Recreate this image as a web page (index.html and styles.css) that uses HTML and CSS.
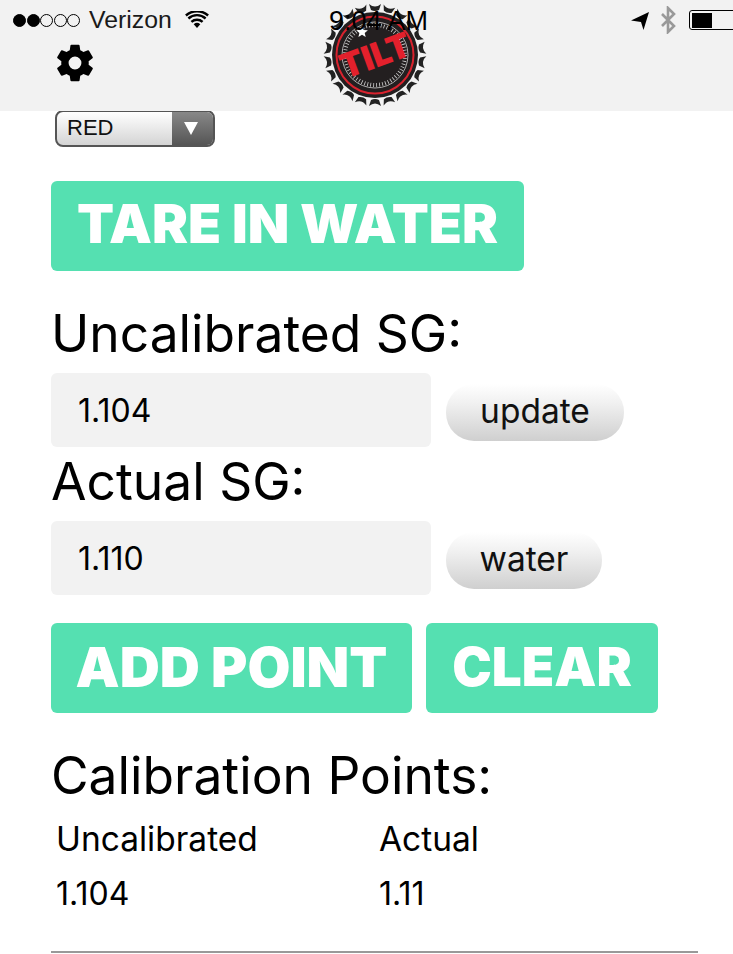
FILE: index.html
```html
<!DOCTYPE html>
<html lang="en">
<head>
<meta charset="utf-8">
<title>Tilt Calibration</title>
<link rel="stylesheet" href="styles.css">
</head>
<body>
<header class="topbar">
  <div class="status">
    <div class="status-left">
      <span class="signal"><i class="dot on"></i><i class="dot on"></i><i class="dot"></i><i class="dot"></i><i class="dot"></i></span>
      <span class="carrier">Verizon</span>
      <svg class="wifi" width="24" height="18" viewBox="0 0 24 18"><path d="M12 17 8.700 13.300a5 5 0 0 1 6.600 0Z" fill="#000"/><path d="M6.400 10.900a8.300 8.300 0 0 1 11.200 0" fill="none" stroke="#000" stroke-width="2.400"/><path d="M3.400 7.500a12.700 12.700 0 0 1 17.200 0" fill="none" stroke="#000" stroke-width="2.400"/><path d="M.9 4.500a16.500 16.500 0 0 1 22.200 0" fill="none" stroke="#000" stroke-width="2.400"/></svg>
    </div>
    <div class="status-right">
      <svg class="arrow" width="19" height="19" viewBox="0 0 19 19"><path d="M0 9.500 18 1 12.500 19 10 11Z" fill="#000"/></svg>
      <svg class="bt" width="16" height="28" viewBox="0 0 16 28"><path d="M2 8 14 20 8 26V2l6 6L2 20" fill="none" stroke="#999" stroke-width="2.600"/></svg>
      <span class="battery"><span class="charge"></span></span>
    </div>
  </div>
  <svg class="gear" width="44" height="44" viewBox="0 0 24 24"><path fill="#000" d="M19.430 12.980c.04-.32.07-.64.07-.98s-.03-.66-.07-.98l2.110-1.650a.5.5 0 0 0 .12-.64l-2-3.460a.5.500 0 0 0-.61-.22l-2.490 1a7.300 7.300 0 0 0-1.690-.98l-.38-2.650A.49.490 0 0 0 14 2h-4a.49.490 0 0 0-.49.420l-.38 2.650c-.61.250-1.170.590-1.690.980l-2.490-1a.5.5 0 0 0-.61.220l-2 3.460a.49.490 0 0 0 .12.640l2.110 1.650c-.04.320-.07.650-.07.980s.03.660.07.980l-2.110 1.650a.5.5 0 0 0-.12.640l2 3.460c.12.220.39.300.61.220l2.490-1c.52.400 1.080.730 1.690.980l.38 2.650c.03.240.24.420.49.420h4c.25 0 .46-.18.490-.420l.38-2.650c.61-.250 1.170-.590 1.690-.980l2.490 1c.23.090.49 0 .61-.220l2-3.460a.5.5 0 0 0-.12-.64zM12 15.500a3.500 3.500 0 1 1 0-7 3.500 3.500 0 0 1 0 7z"/></svg>
  <svg class="logo" width="104" height="104" viewBox="-52 -52 104 104">
    <defs><path id="spike" d="M-6 -51 Q0 -46 6 -51 L4 -45 Q0 -43 -4 -45Z" fill="#222"/></defs>
    <g>
      <use href="#spike"/><use href="#spike" transform="rotate(16.400)"/><use href="#spike" transform="rotate(32.700)"/><use href="#spike" transform="rotate(49.100)"/><use href="#spike" transform="rotate(65.500)"/><use href="#spike" transform="rotate(81.800)"/><use href="#spike" transform="rotate(98.200)"/><use href="#spike" transform="rotate(114.500)"/><use href="#spike" transform="rotate(130.900)"/><use href="#spike" transform="rotate(147.300)"/><use href="#spike" transform="rotate(163.600)"/><use href="#spike" transform="rotate(180)"/><use href="#spike" transform="rotate(196.400)"/><use href="#spike" transform="rotate(212.700)"/><use href="#spike" transform="rotate(229.100)"/><use href="#spike" transform="rotate(245.500)"/><use href="#spike" transform="rotate(261.800)"/><use href="#spike" transform="rotate(278.200)"/><use href="#spike" transform="rotate(294.500)"/><use href="#spike" transform="rotate(310.900)"/><use href="#spike" transform="rotate(327.300)"/><use href="#spike" transform="rotate(343.600)"/>
    </g>
    <circle r="43" fill="#231f20"/>
    <circle r="38.500" fill="none" stroke="#d9232e" stroke-width="2"/>
    <circle r="33" fill="none" stroke="#cfcfcf" stroke-width=".8"/>
    <circle r="30" fill="none" stroke="#cfcfcf" stroke-width="4" stroke-dasharray=".8 2.200"/>
    <g transform="rotate(-20)">
      <text class="logo-text" x="0" y="12.500" text-anchor="middle">TILT</text>
    </g>
    <path d="M-13 -29l1.700 3.900 4.200.3-3.200 2.700 1 4.100-3.700-2.200-3.600 2.200 1-4.100-3.200-2.700 4.200-.3Z" fill="#fff"/>
  </svg>
  <span class="clock">9:04 AM</span>
</header>

<main class="content">
  <div class="picker"><span class="picker-label">RED</span><span class="picker-arrow"></span></div>
  <button class="action tare">TARE IN WATER</button>

  <h2 class="label first">Uncalibrated SG:</h2>
  <div class="field-row">
    <div class="field">1.104</div>
    <button class="pill update">update</button>
  </div>

  <h2 class="label">Actual SG:</h2>
  <div class="field-row">
    <div class="field">1.110</div>
    <button class="pill water">water</button>
  </div>

  <div class="actions">
    <button class="action add">ADD POINT</button>
    <button class="action clear">CLEAR</button>
  </div>

  <h2 class="label points">Calibration Points:</h2>
  <table class="points-table">
    <tr><td class="col-a">Uncalibrated</td><td>Actual</td></tr>
    <tr class="values"><td class="col-a">1.104</td><td>1.11</td></tr>
  </table>
  <hr class="rule">
</main>
</body>
</html>
```
FILE: styles.css
```css
* { box-sizing: border-box; }
html, body { margin: 0; padding: 0; height: 954px; overflow: hidden; background: #fff; }
body { font-family: "Inter", "Liberation Sans", sans-serif; color: #000; }

.topbar { position: relative; z-index: 2; height: 111px; background: #f2f2f2; }
.status { display: flex; justify-content: space-between; align-items: center; height: 40px; padding-left: 13px; font-family: "Liberation Sans", sans-serif; }
.status-left, .status-right { display: flex; align-items: center; }
.signal { display: flex; gap: .5px; }
.dot { width: 13px; height: 13px; border-radius: 50%; border: 1px solid #000; }
.dot.on { background: #000; }
.carrier { margin-left: 9px; font-size: 24.800px; color: #1a1a1a; }
.wifi { margin-left: 13px; }
.status-right { margin-right: -4px; }
.bt { margin-left: 10px; }
.battery { margin-left: 13px; width: 48px; height: 20px; border: 1.500px solid #000; border-radius: 3px; padding: 1.500px; }
.charge { display: block; width: 20px; height: 100%; background: #000; }
.gear { position: absolute; left: 53px; top: 41px; }
.logo { position: absolute; left: 323px; top: 3px; }
.logo-text { font-family: "Inter", sans-serif; font-weight: 900; font-size: 34px; fill: #e3202c; }
.clock { position: absolute; left: 329px; top: 8px; font-family: "Liberation Sans", sans-serif; font-size: 27px; line-height: 26px; }

.content { padding-left: 51px; }
.picker { display: flex; width: 160px; height: 37px; margin: -1px 0 0 4px; border: 2px solid #555; border-radius: 8px; overflow: hidden; background: linear-gradient(#fff, #d4d4d4); }
.picker-label { flex: 1; padding-left: 10px; font-family: "Liberation Sans", sans-serif; font-size: 22px; line-height: 32px; color: #111; }
.picker-arrow { position: relative; width: 41px; background: linear-gradient(#888, #555); }
.picker-arrow::after { content: ""; position: absolute; left: 12px; top: 10px; border-left: 7px solid transparent; border-right: 7px solid transparent; border-top: 13px solid #fff; }

.action { display: block; height: 90px; border: 0; border-radius: 6px; padding: 0 0 2px; background: #55e0b1; color: #fff; font-family: "Inter", sans-serif; font-weight: 900; font-size: 54px; line-height: 86px; text-align: center; }
.tare { width: 473px; margin-top: 34px; padding-bottom: 6px; }
.label { margin: 0; font-weight: 400; font-size: 51.500px; line-height: 60px; }
.label.first { margin-top: 32px; }
.field-row { display: flex; align-items: center; margin-top: 10px; gap: 15px; }
.field { width: 380px; height: 74px; padding-left: 27px; border-radius: 6px; background: #f2f2f2; font-size: 32px; line-height: 75px; }
.pill { height: 57px; margin-top: 5px; border: 0; padding: 0 0 3px; border-radius: 28px; background: linear-gradient(#fff, #f0f0f0 35%, #cfcfcf); font-family: "Inter", sans-serif; font-size: 33.500px; color: #111; }
.update { width: 178px; }
.water { width: 156px; }
.field-row + .label { margin-top: 4px; }
.actions { display: flex; gap: 14px; margin-top: 28px; }
.add { width: 361px; font-size: 55.500px; }
.clear { width: 232px; font-size: 53px; }
.label.points { margin-top: 32px; }
.points-table { margin-top: 7px; border-collapse: collapse; font-size: 33.500px; }
.points-table td { padding: 0 0 0 5px; height: 54px; }
.points-table .values { font-size: 32px; }
.col-a { width: 323px; }
.rule { width: 647px; height: 2px; margin: 31px 0 0; border: 0; background: #999; }
```
